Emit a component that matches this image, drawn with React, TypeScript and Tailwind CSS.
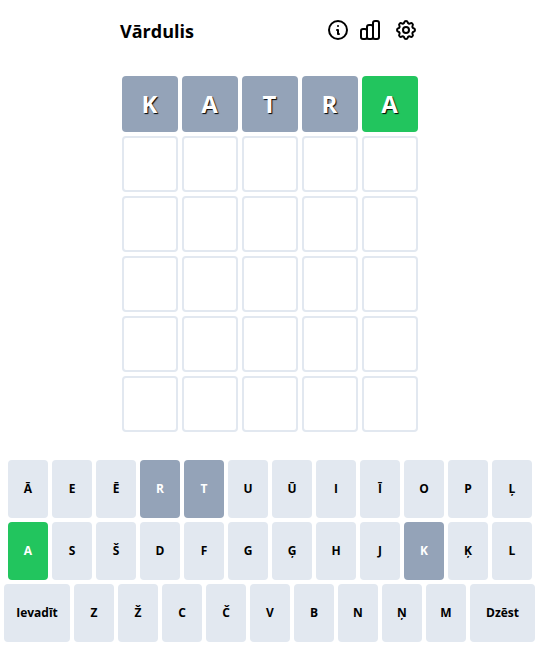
import { HiOutlineChartBar, HiOutlineCog, HiOutlineInformationCircle } from 'react-icons/hi'

type Status = 'none' | 'present' | 'correct'

const guess = ['K', 'A', 'T', 'R', 'A']

const keyRows = [
  ['Ā', 'E', 'Ē', 'R', 'T', 'U', 'Ū', 'I', 'Ī', 'O', 'P', 'Ļ'],
  ['A', 'S', 'Š', 'D', 'F', 'G', 'Ģ', 'H', 'J', 'K', 'Ķ', 'L'],
  ['Ievadīt', 'Z', 'Ž', 'C', 'Č', 'V', 'B', 'N', 'Ņ', 'M', 'Dzēst'],
]

function keyStatus(letter: string): Status {
  if (letter === 'A') return 'correct'
  if (['K', 'T', 'R'].includes(letter)) return 'present'
  return 'none'
}

function Tile({ letter, status }: { letter?: string; status?: Status }) {
  if (!letter) {
    return <div className="w-14 h-14 border-2 border-[#e2e8f0] rounded" />
  }
  return (
    <div
      className={`w-14 h-14 flex items-center justify-center rounded pr-px text-white text-2xl font-bold [text-shadow:1px_1px_1px_#000] ${
        status === 'correct' ? 'bg-[#22c55e]' : 'bg-[#94a3b8]'
      }`}
    >
      {letter}
    </div>
  )
}

function Key({ value }: { value: string }) {
  const status = keyStatus(value)
  const wide = value === 'Ievadīt'
  const wider = value === 'Dzēst'
  let colors = 'bg-[#e2e8f0] text-black'
  if (status === 'correct') colors = 'bg-[#22c55e] text-white'
  if (status === 'present') colors = 'bg-[#94a3b8] text-white'

  return (
    <button
      className={`h-[58px] flex items-center justify-center rounded text-xs font-bold ${colors} ${
        wide ? 'w-[66px]' : wider ? 'w-[65px]' : 'w-10'
      }`}
    >
      {value}
    </button>
  )
}

export default function App() {
  return (
    <div className="h-[650px] overflow-hidden bg-white pt-[18px] pl-[2px] font-['Open_Sans',sans-serif]">
      <div className="flex w-80 mx-auto items-center h-6 mb-[34px] pl-[10px]">
        <h1 className="text-lg font-bold text-black grow mt-[2px]">Vārdulis</h1>
        <HiOutlineInformationCircle className="w-6 h-6 mr-2" />
        <HiOutlineChartBar className="w-6 h-6 mr-3" />
        <HiOutlineCog className="w-6 h-6 mr-3" />
      </div>

      <div className="pb-6">
        <div className="flex justify-center mb-1">
          {guess.map((letter, i) => (
            <div key={i} className={i < 4 ? 'mr-1' : ''}>
              <Tile letter={letter} status={i === 4 ? 'correct' : 'present'} />
            </div>
          ))}
        </div>
        {[0, 1, 2, 3, 4].map((row) => (
          <div key={row} className="flex justify-center gap-1 mb-1">
            {[0, 1, 2, 3, 4].map((col) => (
              <Tile key={col} />
            ))}
          </div>
        ))}
      </div>

      {keyRows.map((row, i) => (
        <div key={i} className={`flex justify-center gap-1 mb-1 ${i === 2 ? '-ml-px' : ''}`}>
          {row.map((key) => (
            <Key key={key} value={key} />
          ))}
        </div>
      ))}
    </div>
  )
}
